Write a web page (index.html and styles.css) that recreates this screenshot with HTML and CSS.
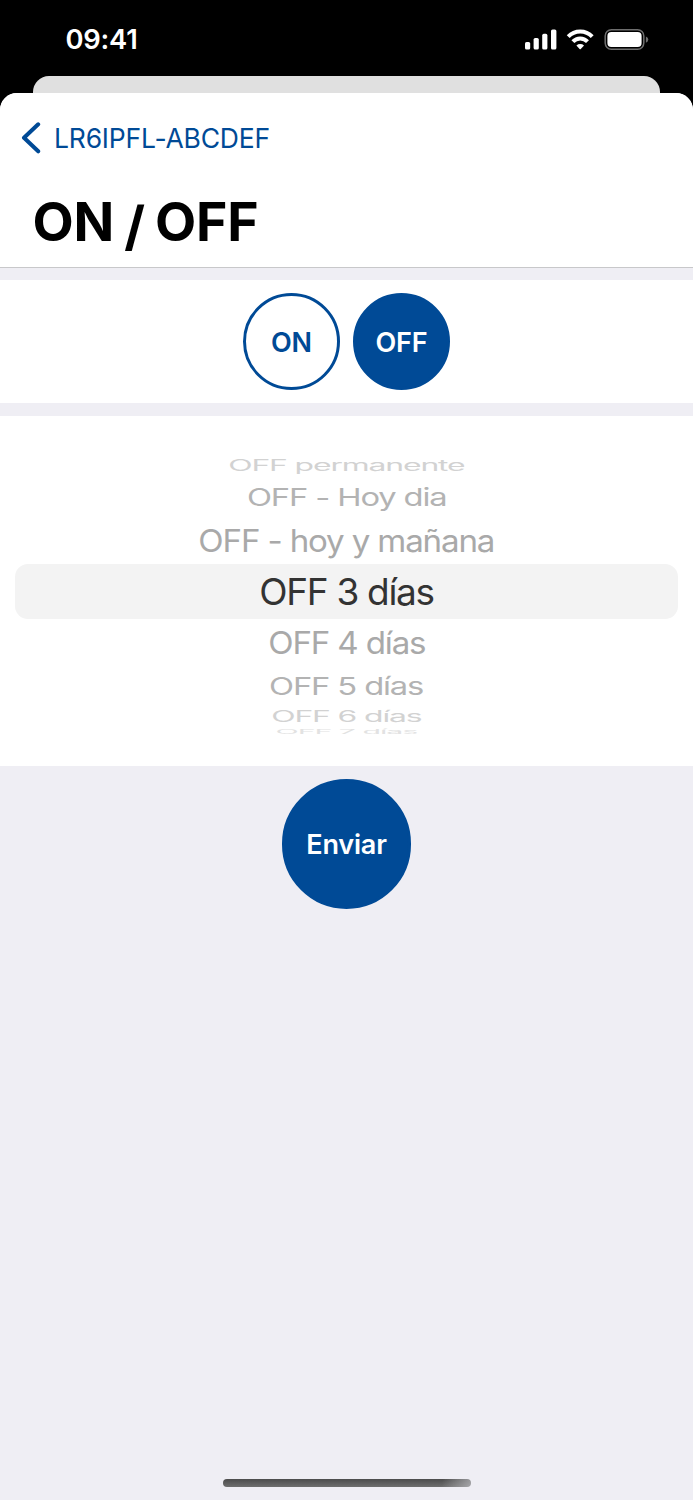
FILE: index.html
```html
<!DOCTYPE html>
<html lang="es">
<head>
    <meta charset="UTF-8">
    <meta name="viewport" content="width=device-width, initial-scale=1.0">
    <title>ON / OFF</title>
    <link rel="stylesheet" href="styles.css">
</head>
<body>
    <div class="status-bar">
        <span class="time">09:41</span>
        <svg class="status-icons" width="126" height="24" viewBox="0 0 126 24">
            <g fill="#fff">
                <rect x="1" y="14" width="5.2" height="7.6" rx="1.6"/>
                <rect x="9.6" y="10" width="5.2" height="11.6" rx="1.6"/>
                <rect x="18.2" y="5.8" width="5.2" height="15.8" rx="1.6"/>
                <rect x="27" y="1.4" width="5.4" height="20.2" rx="1.6"/>
            </g>
            <g fill="none" stroke="#fff" stroke-width="4">
                <path d="M44.2 8.6a16.6 16.6 0 0 1 24 0"/>
                <path d="M48.9 13.6a10 10 0 0 1 14.6 0"/>
            </g>
            <path d="M52.4 17.4a5.6 5.6 0 0 1 7.6 0l-3.2 3.6q-.6.6-1.2 0z" fill="#fff"/>
            <rect x="81.2" y="1.7" width="38.6" height="19.6" rx="6.2" fill="none" stroke="#6e6e6e" stroke-width="1.5"/>
            <rect x="83.4" y="4" width="34.2" height="15" rx="4" fill="#fff"/>
            <path d="M121.9 8.4v6.4q2.4-1 2.4-3.2t-2.4-3.2z" fill="#6e6e6e"/>
        </svg>
    </div>

    <div class="sheet-behind"></div>

    <div class="sheet">
        <header>
            <a class="back">
                <svg width="20" height="32" viewBox="0 0 20 32">
                    <path d="M17.2 2.3L3 15.8l14.2 13.5" fill="none" stroke="#004a96" stroke-width="4" stroke-linecap="round" stroke-linejoin="round"/>
                </svg>
                <span>LR6IPFL-ABCDEF</span>
            </a>
            <h1>ON <span class="slash">/</span> OFF</h1>
        </header>

        <div class="toggle">
            <button class="round outline">ON</button>
            <button class="round">OFF</button>
        </div>

        <div class="picker">
            <div class="row far"><span>OFF permanente</span></div>
            <div class="row mid"><span>OFF - Hoy dia</span></div>
            <div class="row near"><span>OFF - hoy y mañana</span></div>
            <div class="row selected"><span>OFF 3 días</span></div>
            <div class="row near"><span>OFF 4 días</span></div>
            <div class="row mid"><span>OFF 5 días</span></div>
            <div class="row far"><span>OFF 6 días</span></div>
            <div class="row edge"><span>OFF 7 días</span></div>
        </div>

        <button class="round send">Enviar</button>

        <div class="home-indicator"></div>
    </div>
</body>
</html>
```
FILE: styles.css
```css
* {
    box-sizing: border-box;
}
body {
    margin: 0;
    height: 1500px;
    background-color: #000;
    font-family: Inter, "Liberation Sans", sans-serif;
    display: flex;
    flex-direction: column;
    overflow: hidden;
}
.status-bar {
    height: 76px;
    padding: 0 43px 0 65.5px;
    display: flex;
    justify-content: space-between;
    flex-shrink: 0;
}
.time {
    margin-top: 24px;
    color: #fff;
    font-size: 27.3px;
    font-weight: 600;
    line-height: 32px;
    letter-spacing: -0.2px;
}
.status-icons {
    margin-top: 28px;
}
.sheet-behind {
    height: 17px;
    margin: 0 33px;
    background-color: #e0e0e0;
    border-radius: 16px 16px 0 0;
    flex-shrink: 0;
}
.sheet {
    flex: 1;
    background-color: #efeef4;
    border-radius: 17px 17px 0 0;
    overflow: hidden;
    display: flex;
    flex-direction: column;
}
header {
    height: 175px;
    background-color: #fff;
    border-bottom: 1px solid #c8c8ca;
    flex-shrink: 0;
}
.back {
    display: flex;
    align-items: center;
    gap: 13px;
    height: 32px;
    margin: 29px 0 0 21px;
    color: #004a96;
    font-size: 26.5px;
    letter-spacing: -0.2px;
}
h1 {
    margin: 36px 0 0 32.5px;
    font-size: 53.5px;
    line-height: 64px;
    font-weight: 700;
    letter-spacing: -0.3px;
    word-spacing: -2px;
}
.slash {
    vertical-align: -4px;
    line-height: 1;
}
.toggle {
    height: 123px;
    margin: 12px 0 13px;
    background-color: #fff;
    display: flex;
    justify-content: center;
    align-items: center;
    gap: 13px;
    flex-shrink: 0;
}
.round {
    width: 97px;
    height: 97px;
    padding: 2px 0 0;
    border: 3px solid #004a96;
    border-radius: 50%;
    background-color: #004a96;
    color: #fff;
    font-family: inherit;
    font-size: 27px;
    font-weight: 600;
    letter-spacing: -0.2px;
    flex-shrink: 0;
}
.outline {
    background-color: #fff;
    color: #004a96;
}
.picker {
    height: 350px;
    padding: 39px 15px 0;
    background-color: #fff;
    flex-shrink: 0;
}
.row {
    display: flex;
    justify-content: center;
    align-items: center;
    color: #a9a9a9;
    font-size: 37px;
    white-space: nowrap;
    letter-spacing: -1.3px;
}
.selected {
    height: 55px;
    background-color: #f3f3f3;
    border-radius: 13px;
    color: #333;
}
/* rows turn away from the viewer towards both ends of the wheel */
.near {
    height: 47px;
}
.near span {
    transform: scale(0.895, 0.83);
}
.mid {
    height: 40.5px;
    padding-top: 2px;
    color: #b3b3b3;
}
.mid span {
    transform: scale(0.885, 0.65);
}
.far {
    height: 21px;
    color: #d2d2d2;
}
.far span {
    transform: scale(0.86, 0.41);
}
.edge {
    height: 7.5px;
    padding-top: 2px;
    color: #e2e2e2;
    overflow: hidden;
}
.edge span {
    transform: scale(0.82, 0.18);
}
.send {
    width: 129.5px;
    height: 129.5px;
    margin: 13px auto 0;
}
.home-indicator {
    width: 248px;
    height: 8px;
    margin: auto auto 13px;
    border-radius: 4px;
    background: linear-gradient(100deg, transparent 88%, rgba(190, 190, 194, 0.7)), linear-gradient(#4c4c4c, #6e6e6e);
}
```
